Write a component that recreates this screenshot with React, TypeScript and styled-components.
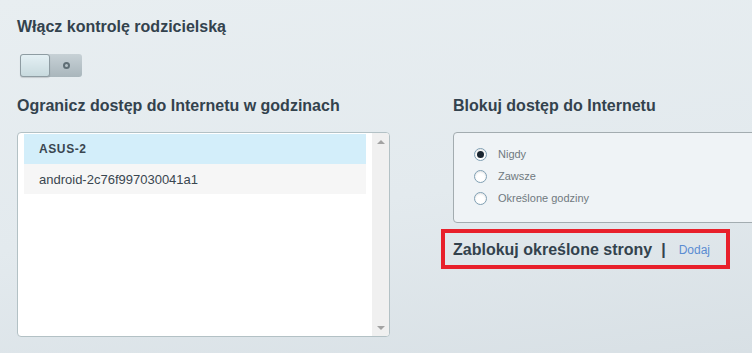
import React, { useState } from 'react';
import styled, { createGlobalStyle } from 'styled-components';

const GlobalStyle = createGlobalStyle`
  html, body {
    margin: 0;
    padding: 0;
    overflow: hidden;
  }
  body {
    font-family: "Liberation Sans", Arial, sans-serif;
  }
`;

const Page = styled.div`
  width: 752px;
  height: 353px;
  box-sizing: border-box;
  padding: 17px 0 0 17px;
  background: linear-gradient(172deg, #e8eef1 0%, #e3eaee 55%, #d8e0e5 100%);
  overflow: hidden;
`;

const Heading = styled.div`
  font-size: 16px;
  font-weight: bold;
  line-height: 20px;
  color: #33424d;
  white-space: nowrap;
`;

const Toggle = styled.button`
  display: flex;
  width: 62px;
  height: 23px;
  margin: 17px 0 0 3px;
  padding: 0;
  border: none;
  border-radius: 3px;
  background: linear-gradient(#c7d1d6, #a9b6bc);
  cursor: pointer;
`;

const Knob = styled.span`
  width: 30px;
  height: 23px;
  box-sizing: border-box;
  border: 1px solid #8e9ca2;
  border-radius: 3px;
  background: linear-gradient(#e4f0f4, #c8dade);
  box-shadow: 0 1px 1px rgba(0, 0, 0, 0.15);
`;

const ToggleTrack = styled.span`
  flex: 1;
  display: flex;
  align-items: center;
  justify-content: center;
`;

const Ring = styled.span`
  width: 7px;
  height: 7px;
  box-sizing: border-box;
  border: 2px solid #5f6e75;
  border-radius: 50%;
`;

const Columns = styled.div`
  display: flex;
  gap: 63px;
  margin-top: 19px;
`;

const LeftColumn = styled.div`
  width: 373px;
  flex-shrink: 0;
`;

const RightColumn = styled.div`
  width: 320px;
  flex-shrink: 0;
`;

const ListBox = styled.div`
  display: flex;
  height: 205px;
  margin-top: 16px;
  box-sizing: border-box;
  border: 1px solid #b3c1c5;
  border-radius: 4px;
  background: #fff;
  overflow: hidden;
`;

const ListItems = styled.div`
  flex: 1;
  padding: 1px 6px 0 6px;
`;

const ListRow = styled.div<{ $selected?: boolean }>`
  height: 30px;
  padding-left: 15px;
  display: flex;
  align-items: center;
  font-size: ${({ $selected }) => ($selected ? '12px' : '13px')};
  font-weight: ${({ $selected }) => ($selected ? 'bold' : 'normal')};
  letter-spacing: ${({ $selected }) => ($selected ? '0.6px' : '0')};
  color: #3a4650;
  background: ${({ $selected }) => ($selected ? '#d3eefa' : '#f6f6f6')};
`;

const Scrollbar = styled.div`
  width: 17px;
  background: #f0f0f0;
  display: flex;
  flex-direction: column;
  justify-content: space-between;
  align-items: center;
  padding: 7px 0 6px;
`;

const Arrow = styled.span<{ $down?: boolean }>`
  width: 0;
  height: 0;
  border-left: 4px solid transparent;
  border-right: 4px solid transparent;
  ${({ $down }) =>
    $down ? 'border-top: 4px solid #a3a3a3;' : 'border-bottom: 4px solid #a3a3a3;'}
`;

const OptionsPanel = styled.div`
  width: 320px;
  margin-top: 16px;
  box-sizing: border-box;
  padding: 10px 0 13px 20px;
  border: 1px solid #a3acb0;
  border-radius: 4px;
  background: #eff3f6;
`;

const RadioRow = styled.label`
  display: flex;
  align-items: center;
  height: 22px;
  gap: 11px;
  font-size: 11px;
  color: #6f7980;
  cursor: pointer;
`;

const RadioDot = styled.span<{ $checked?: boolean }>`
  width: 13px;
  height: 13px;
  box-sizing: border-box;
  border: 1px solid #7f9fb3;
  border-radius: 50%;
  background: #fff;
  display: flex;
  align-items: center;
  justify-content: center;
  box-shadow: inset 0 1px 2px rgba(0, 0, 0, 0.12);

  &::after {
    content: '';
    width: 7px;
    height: 7px;
    border-radius: 50%;
    background: #1a2530;
    display: ${({ $checked }) => ($checked ? 'block' : 'none')};
  }
`;

const Highlight = styled.div`
  display: flex;
  align-items: center;
  width: 289px;
  height: 40px;
  margin: 6px 0 0 -12px;
  box-sizing: border-box;
  padding: 1px 0 0 8px;
  border: 4px solid #e8202b;
`;

const Separator = styled.span`
  margin: 0 13px 0 9px;
  font-size: 16px;
  font-weight: bold;
  color: #33424d;
`;

const AddLink = styled.a`
  font-size: 12px;
  color: #5a8cd2;
  text-decoration: none;
  cursor: pointer;
`;

const devices = ['ASUS-2', 'android-2c76f997030041a1'];
const options = ['Nigdy', 'Zawsze', 'Określone godziny'];

export default function App() {
  const [enabled, setEnabled] = useState(false);
  const [selected, setSelected] = useState(0);
  const [block, setBlock] = useState('Nigdy');

  return (
    <>
      <GlobalStyle />
      <Page>
        <Heading>Włącz kontrolę rodzicielską</Heading>
        <Toggle onClick={() => setEnabled(!enabled)}>
          <Knob />
          <ToggleTrack>
            <Ring />
          </ToggleTrack>
        </Toggle>
        <Columns>
          <LeftColumn>
            <Heading>Ogranicz dostęp do Internetu w godzinach</Heading>
            <ListBox>
              <ListItems>
                {devices.map((d, i) => (
                  <ListRow key={d} $selected={i === selected} onClick={() => setSelected(i)}>
                    {d}
                  </ListRow>
                ))}
              </ListItems>
              <Scrollbar>
                <Arrow />
                <Arrow $down />
              </Scrollbar>
            </ListBox>
          </LeftColumn>
          <RightColumn>
            <Heading>Blokuj dostęp do Internetu</Heading>
            <OptionsPanel>
              {options.map((o) => (
                <RadioRow key={o} onClick={() => setBlock(o)}>
                  <RadioDot $checked={block === o} />
                  {o}
                </RadioRow>
              ))}
            </OptionsPanel>
            <Highlight>
              <Heading>Zablokuj określone strony</Heading>
              <Separator>|</Separator>
              <AddLink>Dodaj</AddLink>
            </Highlight>
          </RightColumn>
        </Columns>
      </Page>
    </>
  );
}
